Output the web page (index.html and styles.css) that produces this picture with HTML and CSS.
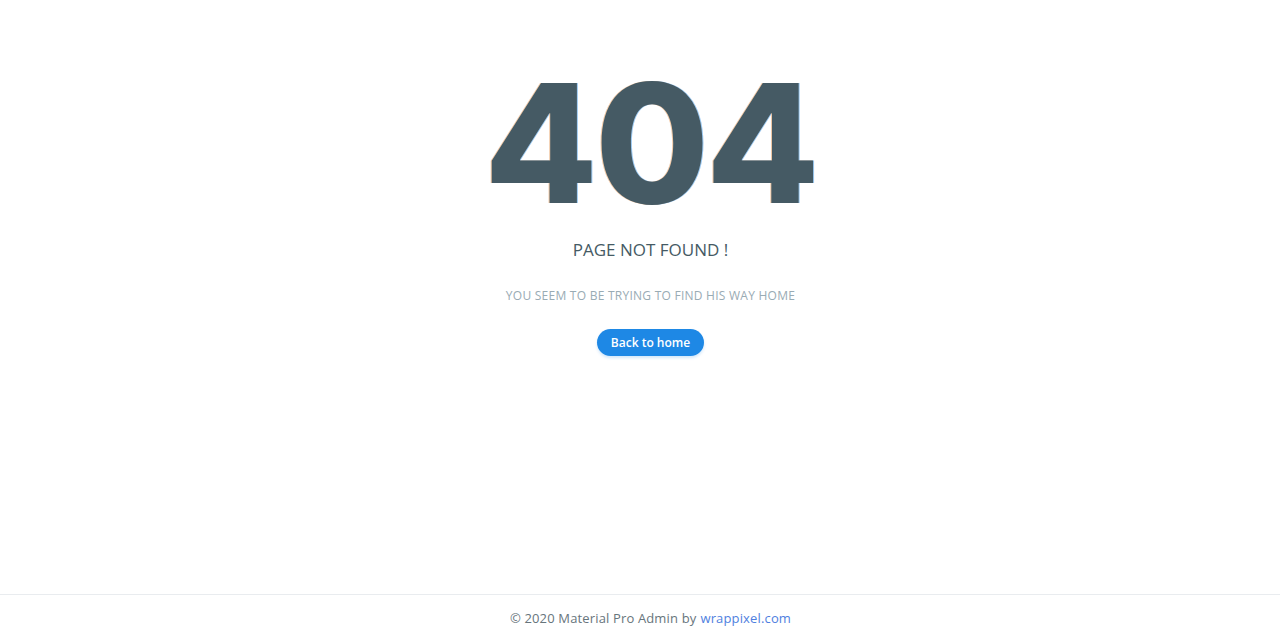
FILE: index.html
```html
<!DOCTYPE html>
<html lang="en">
<head>
<meta charset="utf-8">
<title>404 - Page not found</title>
<link rel="stylesheet" href="styles.css">
</head>
<body>
<div class="page">
  <main class="error-box">
    <h1 class="code">404</h1>
    <h3 class="title">PAGE NOT FOUND !</h3>
    <p class="subtitle">YOU SEEM TO BE TRYING TO FIND HIS WAY HOME</p>
    <a class="btn" href="#">Back to home</a>
  </main>
  <footer class="footer">© 2020 Material Pro Admin by <a class="footer-link" href="#">wrappixel.com</a></footer>
</div>
</body>
</html>
```
FILE: styles.css
```css
html, body {
  margin: 0;
  padding: 0;
  background: #fff;
}
body {
  font-family: "Open Sans", "Noto Sans", sans-serif;
  color: #67757c;
}
.page {
  min-height: 640px;
  display: flex;
  flex-direction: column;
}
.error-box {
  flex: 1;
  display: flex;
  flex-direction: column;
  align-items: center;
  padding-top: 61px;
  padding-left: 21px;
}
.code {
  margin: 0;
  font-family: "Inter", sans-serif;
  font-weight: 800;
  font-size: 165px;
  line-height: 165px;
  color: #455a64;
  letter-spacing: -3px;
  text-shadow: -1px 0 0 rgba(230,150,80,0.5), 1px 0 0 rgba(60,150,230,0.5);
}
.title {
  margin: 13px 0 0;
  font-weight: 400;
  font-size: 17px;
  line-height: 22px;
  color: #455a64;
}
.subtitle {
  margin: 26px 0 0;
  font-size: 12px;
  line-height: 18px;
  letter-spacing: 0.25px;
  color: #99abb4;
}
.btn {
  margin-top: 24px;
  display: inline-flex;
  align-items: center;
  justify-content: center;
  width: 107px;
  height: 27px;
  border-radius: 60px;
  background: #1e88e5;
  color: #fff;
  font-size: 12px;
  font-weight: 600;
  text-decoration: none;
  box-shadow: 0 2px 3px rgba(30,136,229,0.2);
}
.footer {
  border-top: 1px solid #e9ecef;
  height: 45px;
  display: flex;
  align-items: center;
  justify-content: center;
  padding-left: 21px;
  font-size: 13px;
  letter-spacing: 0.15px;
  color: #67757c;
}
.footer-link {
  color: #4f7fe0;
  text-decoration: none;
  margin-left: 4px;
}
```
